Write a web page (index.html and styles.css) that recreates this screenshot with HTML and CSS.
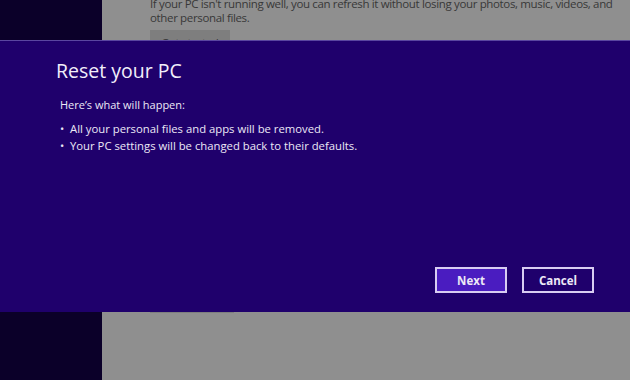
FILE: index.html
```html
<!DOCTYPE html>
<html>
<head>
<meta charset="utf-8">
<link rel="stylesheet" href="styles.css">
</head>
<body>
<div class="screen">
  <div class="sidebar"></div>
  <div class="content">
    <p class="desc">If your PC isn't running well, you can refresh it without losing your photos, music, videos, and other personal files.</p>
    <div class="gbtn gbtn-top">Get started</div>
    <div class="spacer"></div>
    <div class="gbtn gbtn-bottom">Get started</div>
  </div>
  <div class="dialog">
    <div class="dialog-inner">
      <h1 class="title">Reset your PC</h1>
      <p class="lead">Here’s what will happen:</p>
      <ul class="list">
        <li>All your personal files and apps will be removed.</li>
        <li>Your PC settings will be changed back to their defaults.</li>
      </ul>
      <div class="actions">
        <button class="btn btn-primary">Next</button>
        <button class="btn">Cancel</button>
      </div>
    </div>
  </div>
</div>
</body>
</html>
```
FILE: styles.css
```css
html, body {
  margin: 0;
  padding: 0;
  width: 630px;
  height: 380px;
  overflow: hidden;
}
body {
  font-family: "Open Sans", "Noto Sans", sans-serif;
}
.screen {
  position: relative;
  display: grid;
  grid-template-columns: 102px 1fr;
  height: 380px;
}
.sidebar {
  background: #0b0029;
}
.content {
  background: #8f8f8f;
  padding-left: 48px;
  display: flex;
  flex-direction: column;
  align-items: flex-start;
}
.desc {
  margin: -3px 0 0 0;
  width: 470px;
  font-size: 11.5px;
  letter-spacing: -0.35px;
  line-height: 14px;
  color: #383838;
}
.gbtn {
  background: #7e7e7e;
  width: 80px;
  height: 24px;
  font-size: 11px;
  color: #333;
  text-align: center;
  line-height: 26px;
}
.gbtn-top {
  margin-top: 5px;
}
.spacer {
  height: 234px;
}
.gbtn-bottom {
  width: 84px;
  height: 25px;
}
.dialog {
  position: absolute;
  left: 0;
  top: 41px;
  width: 630px;
  height: 271px;
  background: #1f006c;
  box-shadow: 0 -1px 0 #5a46a0;
}
.dialog-inner {
  display: flex;
  flex-direction: column;
  padding: 16px 36px 0 56px;
  color: #fff;
}
.title {
  margin: 0;
  font-weight: 400;
  font-size: 19.5px;
  line-height: 28px;
  color: #f2eefa;
}
.lead {
  margin: 12px 0 0 4px;
  font-size: 11px;
  line-height: 16px;
  color: #ece8f6;
}
.list {
  margin: 7px 0 0 4px;
  padding: 0;
  list-style: none;
  font-size: 11.3px;
  line-height: 17px;
  color: #ece8f6;
}
.list li::before {
  content: "•";
  display: inline-block;
  width: 10px;
}
.actions {
  display: flex;
  justify-content: flex-end;
  gap: 15px;
  margin-top: 113px;
}
.btn {
  width: 72px;
  height: 26px;
  box-sizing: border-box;
  border: 2px solid #d8ccf2;
  background: #1f006c;
  color: #ece8f6;
  font-family: "Open Sans", "Noto Sans", sans-serif;
  font-weight: 700;
  font-size: 11.5px;
  padding: 0;
}
.btn-primary {
  background: #4a1cc0;
}
```
